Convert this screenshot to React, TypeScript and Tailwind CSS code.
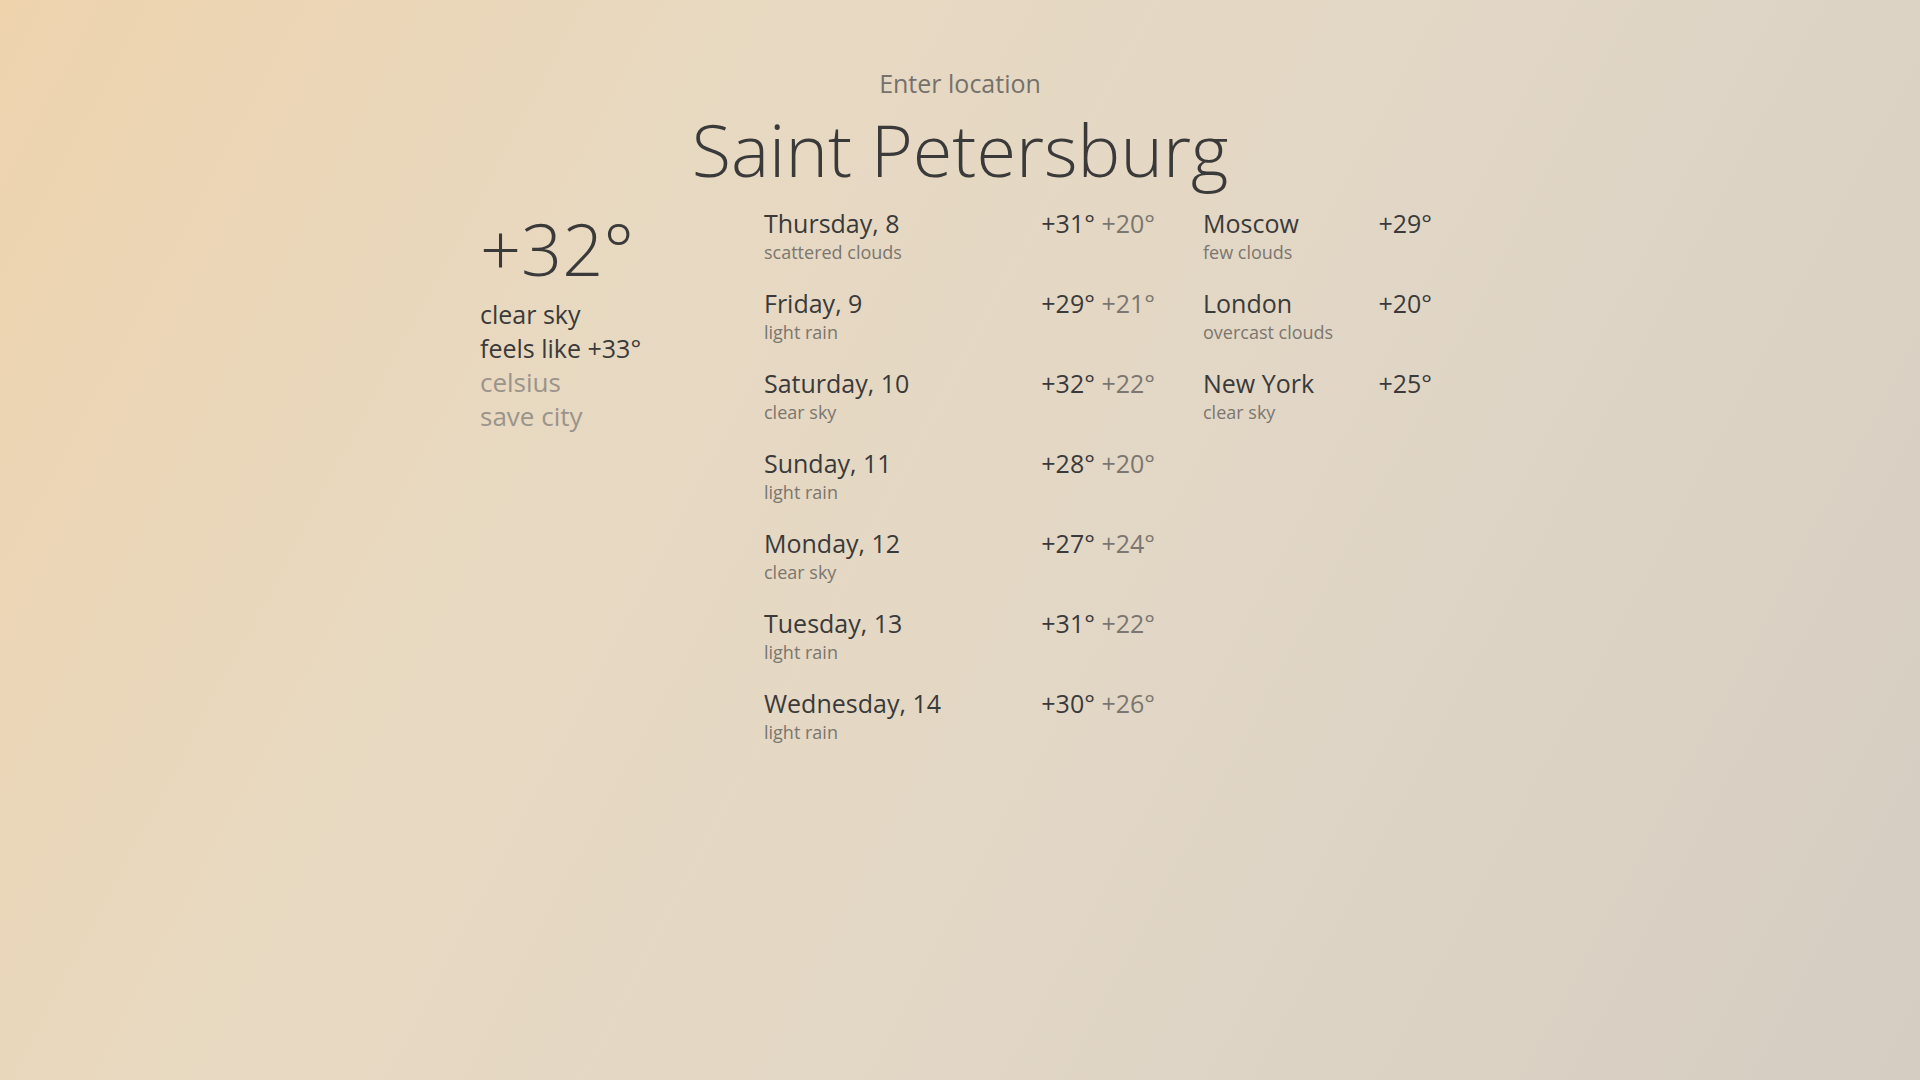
import { useState } from "react"

// Forecast data - would normally come from the weather API
const forecast = [
  { day: "Thursday, 8", desc: "scattered clouds", max: "+31°", min: "+20°" },
  { day: "Friday, 9", desc: "light rain", max: "+29°", min: "+21°" },
  { day: "Saturday, 10", desc: "clear sky", max: "+32°", min: "+22°" },
  { day: "Sunday, 11", desc: "light rain", max: "+28°", min: "+20°" },
  { day: "Monday, 12", desc: "clear sky", max: "+27°", min: "+24°" },
  { day: "Tuesday, 13", desc: "light rain", max: "+31°", min: "+22°" },
  { day: "Wednesday, 14", desc: "light rain", max: "+30°", min: "+26°" },
]

const savedCities = [
  { name: "Moscow", desc: "few clouds", temp: "+29°" },
  { name: "London", desc: "overcast clouds", temp: "+20°" },
  { name: "New York", desc: "clear sky", temp: "+25°" },
]

export default function App() {
  const [location, setLocation] = useState("")

  return (
    <div className="min-h-screen w-full bg-[linear-gradient(118deg,#eed3ad_0%,#e8d9c1_30%,#e2d7c6_60%,#d5cdc2_100%)] font-['Open_Sans',sans-serif] text-[#3a3a3a]">
      <div className="mx-auto w-[960px] pt-[67px]">
        {/* Search */}
        <input
          value={location}
          onChange={(e) => setLocation(e.target.value)}
          placeholder="Enter location"
          className="block h-[33px] w-full bg-transparent text-center text-[25px] text-[#3a3a3a] outline-none placeholder:text-[#75716b]"
        />

        {/* City title */}
        <h1 className="text-center text-7xl font-light leading-[98px]">Saint Petersburg</h1>

        <div className="mt-px flex">
          {/* Current weather */}
          <div className="w-[284px]">
            <div className="text-7xl font-light leading-[98px]">+32°</div>
            <p className="text-[25px] leading-[34px]">clear sky</p>
            <p className="text-[25px] leading-[34px]">feels like +33°</p>
            <button className="block text-[26px] leading-[34px] text-[#9a948b]">celsius</button>
            <button className="block text-[26px] leading-[34px] text-[#9a948b]">save city</button>
          </div>

          {/* 7 day forecast */}
          <div className="w-[391px] pt-2">
            {forecast.map((item) => (
              <div key={item.day} className="mb-[23px] flex justify-between">
                <div>
                  <p className="text-[25px] leading-[33px]">{item.day}</p>
                  <p className="text-lg leading-[24px] text-[#7b766f]">{item.desc}</p>
                </div>
                <p className="text-[25px] leading-[33px]">
                  {item.max} <span className="text-[#7b766f]">{item.min}</span>
                </p>
              </div>
            ))}
          </div>

          {/* Saved cities */}
          <div className="ml-[48px] w-[229px] pt-2">
            {savedCities.map((city) => (
              <div key={city.name} className="mb-[23px] flex justify-between">
                <div>
                  <p className="text-[25px] leading-[33px]">{city.name}</p>
                  <p className="text-lg leading-[24px] text-[#7b766f]">{city.desc}</p>
                </div>
                <p className="text-[25px] leading-[33px]">{city.temp}</p>
              </div>
            ))}
          </div>
        </div>
      </div>
    </div>
  )
}
